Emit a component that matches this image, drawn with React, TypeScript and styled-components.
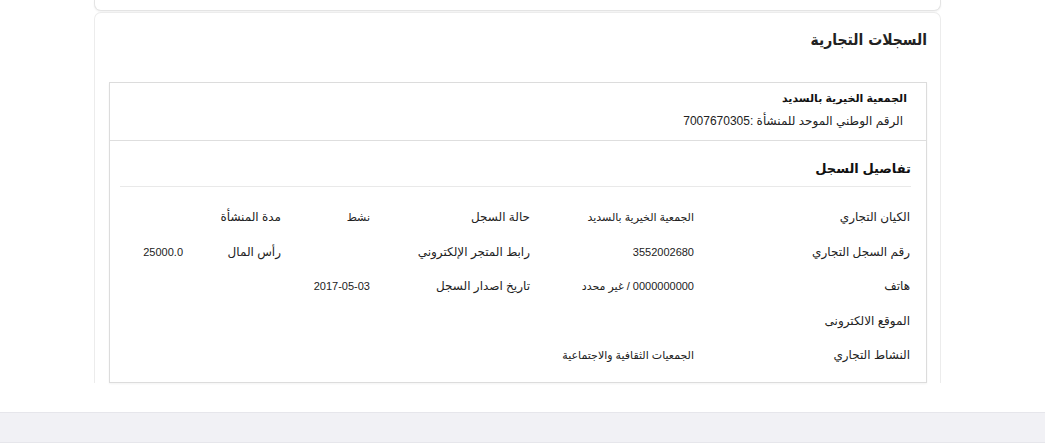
import styled, { createGlobalStyle } from 'styled-components';

const GlobalStyle = createGlobalStyle`
  html, body {
    margin: 0;
    padding: 0;
    background: #fff;
  }
  body {
    font-family: "Liberation Sans", "DejaVu Sans", sans-serif;
    color: #212529;
  }
  * {
    box-sizing: border-box;
  }
`;

const Page = styled.div`
  direction: rtl;
  padding: 0 104px 0 94px;
`;

const TopCard = styled.div`
  height: 11px;
  background: #fff;
  border: 1px solid #e4e4e4;
  border-top: none;
  border-radius: 0 0 7px 7px;
  box-shadow: 0 1px 2px rgba(0, 0, 0, 0.06);
`;

const Card = styled.section`
  margin-top: 1px;
  background: #fff;
  border: 1px solid #ececec;
  border-bottom: none;
  border-radius: 7px 7px 0 0;
  padding: 0 13px 0 14px;
`;

const CardTitle = styled.h2`
  margin: 0 0 15px;
  height: 54px;
  display: flex;
  align-items: center;
  font-family: "DejaVu Sans Condensed", "DejaVu Sans", sans-serif;
  font-size: 15.5px;
  font-weight: 700;
  color: #222;
`;

const RecordBox = styled.div`
  border: 1px solid #dcdcdc;
  box-shadow: 0 1px 2px rgba(0, 0, 0, 0.05);
`;

const RecordHead = styled.div`
  height: 58px;
  padding: 8px 19px 0 0;
  display: flex;
  flex-direction: column;
  gap: 9px;
  border-bottom: 1px solid #dedede;
`;

const OrgName = styled.div`
  font-size: 11px;
  line-height: 14px;
  font-weight: 700;
  color: #111;
`;

const OrgNumber = styled.div`
  font-size: 12px;
  line-height: 14px;
  color: #222;
  padding-right: 4px;
`;

const Details = styled.div`
  padding: 0 15px 9px 10px;
`;

const DetailsTitle = styled.h3`
  margin: 0;
  height: 46px;
  display: flex;
  align-items: center;
  padding-top: 10px;
  font-size: 13px;
  font-weight: 700;
  color: #111;
  border-bottom: 1px solid #e9e9e9;
`;

const Grid = styled.div`
  display: grid;
  grid-template-columns: 216px 164px 160px 89px 98px 1fr;
  grid-auto-rows: 34.5px;
  padding: 13px 1px 0 0;
`;

const Cell = styled.div<{ $label?: boolean }>`
  display: flex;
  align-items: center;
  font-size: ${(p) => (p.$label ? '12px' : '11px')};
  color: #222;
  white-space: nowrap;
`;

const rows: string[][] = [
  ['الكيان التجاري', 'الجمعية الخيرية بالسديد', 'حالة السجل', 'نشط', 'مدة المنشأة', ''],
  ['رقم السجل التجاري', '3552002680', 'رابط المتجر الإلكتروني', '', 'رأس المال', '25000.0'],
  ['هاتف', '0000000000 / غير محدد', 'تاريخ اصدار السجل', '2017-05-03', '', ''],
  ['الموقع الالكترونى', '', '', '', '', ''],
  ['النشاط التجاري', 'الجمعيات الثقافية والاجتماعية', '', '', '', ''],
];

const Spacer = styled.div`
  height: 29px;
`;

const Footer = styled.footer`
  height: 31px;
  background: #f1f1f5;
  border-top: 1px solid #e6e6eb;
  border-bottom: 1px solid #e6e6eb;
`;

export default function App() {
  return (
    <>
      <GlobalStyle />
      <Page>
        <TopCard />
        <Card>
          <CardTitle>السجلات التجارية</CardTitle>
          <RecordBox>
            <RecordHead>
              <OrgName>الجمعية الخيرية بالسديد</OrgName>
              <OrgNumber>الرقم الوطني الموحد للمنشأة :7007670305</OrgNumber>
            </RecordHead>
            <Details>
              <DetailsTitle>تفاصيل السجل</DetailsTitle>
              <Grid>
                {rows.map((row, i) =>
                  row.map((text, j) => (
                    <Cell key={`${i}-${j}`} $label={j % 2 === 0}>
                      {text}
                    </Cell>
                  ))
                )}
              </Grid>
            </Details>
          </RecordBox>
        </Card>
      </Page>
      <Spacer />
      <Footer />
    </>
  );
}
